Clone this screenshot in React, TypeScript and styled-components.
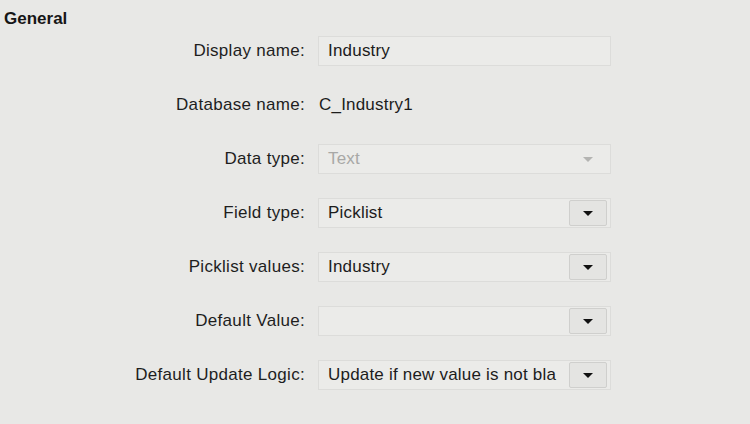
import styled, { createGlobalStyle } from 'styled-components'

const GlobalStyle = createGlobalStyle`
  html, body {
    margin: 0;
    padding: 0;
    background: #e8e8e6;
  }
  body {
    font-family: "Liberation Sans", Arial, sans-serif;
    color: #1c1c1c;
  }
`

type Field =
  | { label: string; kind: 'input'; value: string }
  | { label: string; kind: 'text'; value: string }
  | { label: string; kind: 'select'; value: string; disabled?: boolean }

const fields: Field[] = [
  { label: 'Display name:', kind: 'input', value: 'Industry' },
  { label: 'Database name:', kind: 'text', value: 'C_Industry1' },
  { label: 'Data type:', kind: 'select', value: 'Text', disabled: true },
  { label: 'Field type:', kind: 'select', value: 'Picklist' },
  { label: 'Picklist values:', kind: 'select', value: 'Industry' },
  { label: 'Default Value:', kind: 'select', value: '' },
  { label: 'Default Update Logic:', kind: 'select', value: 'Update if new value is not bla' }
]

export default function App () {
  return (
    <Page>
      <GlobalStyle />
      <Heading>General</Heading>
      <Form>
        {fields.map((f) => (
          <Row key={f.label}>
            <Label>{f.label}</Label>
            {f.kind === 'text' && <PlainValue>{f.value}</PlainValue>}
            {f.kind === 'input' && (
              <Box>
                <BoxText>{f.value}</BoxText>
              </Box>
            )}
            {f.kind === 'select' && (
              <Box>
                <BoxText disabled={f.disabled}>{f.value}</BoxText>
                <DropButton disabled={f.disabled}>
                  <Arrow disabled={f.disabled} />
                </DropButton>
              </Box>
            )}
          </Row>
        ))}
      </Form>
    </Page>
  )
}

const Page = styled.div`
  width: 750px;
  height: 424px;
  overflow: hidden;
  padding: 9px 0 0 4px;
  box-sizing: border-box;
`

const Heading = styled.div`
  font-size: 17px;
  font-weight: bold;
  line-height: 20px;
  color: #161616;
`

const Form = styled.div`
  display: flex;
  flex-direction: column;
  margin-top: -5px;
`

const Row = styled.div`
  display: grid;
  grid-template-columns: 301px 293px;
  column-gap: 13px;
  align-items: center;
  height: 54px;
`

const Label = styled.div`
  text-align: right;
  font-size: 17px;
  letter-spacing: 0.3px;
  white-space: nowrap;
  color: #1e1e1e;
`

const PlainValue = styled.div`
  font-size: 17px;
  letter-spacing: 0.2px;
  padding-left: 1px;
`

const Box = styled.div`
  display: flex;
  align-items: center;
  height: 30px;
  border: 1px solid #dcdcda;
  background: #ebebe9;
  box-sizing: border-box;
  padding-right: 3px;
`

const BoxText = styled.div<{ disabled?: boolean }>`
  flex: 1;
  padding-left: 9px;
  font-size: 17px;
  letter-spacing: 0.2px;
  white-space: nowrap;
  overflow: hidden;
  color: ${(p) => (p.disabled ? '#a8a8a6' : '#1c1c1c')};
`

const DropButton = styled.div<{ disabled?: boolean }>`
  width: 38px;
  height: 26px;
  display: flex;
  align-items: center;
  justify-content: center;
  box-sizing: border-box;
  border: 1px solid ${(p) => (p.disabled ? 'transparent' : '#cfcfcd')};
  border-radius: 2px;
  background: ${(p) => (p.disabled ? 'transparent' : '#e4e4e2')};
`

const Arrow = styled.div<{ disabled?: boolean }>`
  width: 0;
  height: 0;
  border-left: 5px solid transparent;
  border-right: 5px solid transparent;
  border-top: 5px solid ${(p) => (p.disabled ? '#b4b4b2' : '#111')};
`
